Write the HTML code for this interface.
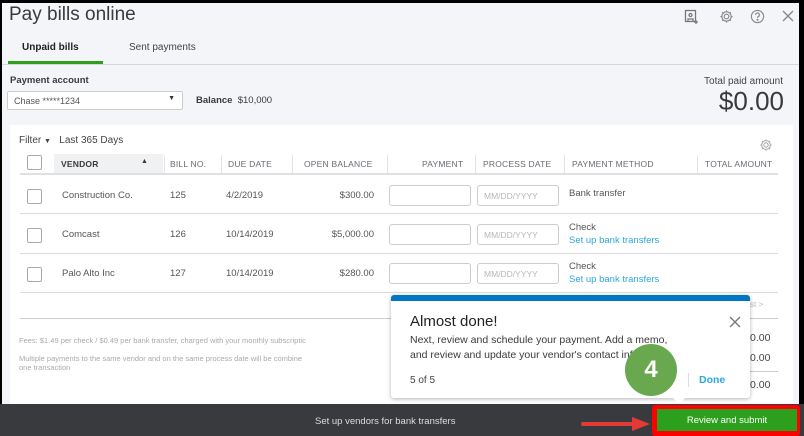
<!DOCTYPE html>
<html><head><meta charset="utf-8"><style>
*{margin:0;padding:0;box-sizing:border-box}
body{width:804px;height:436px;overflow:hidden;background:#000;font-family:"Liberation Sans",sans-serif;color:#393a3d;position:relative}
.a{position:absolute}
#pg{position:absolute;left:0;top:0;width:804px;height:436px;background:#f4f5f8;overflow:hidden}
.s{font-size:9.5px;color:#555}
.h{font-size:8.5px;color:#6b6c72;letter-spacing:.2px}
.cb{position:absolute;width:15px;height:15px;border:1px solid #aaa;background:#fff;border-radius:2px}
.in{position:absolute;width:82px;height:21px;border:1px solid #ccc;border-radius:3px;background:#fff}
.dt{position:absolute;width:82px;height:21px;border:1px solid #ccc;border-radius:3px;background:#fff;font-size:8.5px;color:#b8b8b8;padding:5px 0 0 6px}
.ln{position:absolute;height:1px;background:#dcdcdc}
.lk{color:#2ca7e0}
</style></head><body>
<div id="pg">
<div class="a" style="left:9px;top:4px;font-size:19px;color:#393a3d">Pay bills online</div>
<svg class="a" style="left:684px;top:9px" width="16" height="16" viewBox="0 0 16 16" fill="none" stroke="#777" stroke-width="1.3"><rect x="1.5" y="1.5" width="10" height="11"/><circle cx="6.5" cy="6" r="1.5"/><path d="M4 12v-2h5v2M12 11v4M10 13h4"/></svg>
<svg class="a" style="left:719px;top:9px" width="15" height="15" viewBox="0 0 16 16" fill="none" stroke="#888" stroke-width="1.2"><circle cx="8" cy="8" r="2.5"/><path d="M8 1.5v2M8 12.5v2M1.5 8h2M12.5 8h2M3.4 3.4l1.4 1.4M11.2 11.2l1.4 1.4M3.4 12.6l1.4-1.4M11.2 4.8l1.4-1.4"/><circle cx="8" cy="8" r="5"/></svg>
<svg class="a" style="left:750px;top:9px" width="15" height="15" viewBox="0 0 16 16" fill="none" stroke="#888" stroke-width="1.2"><circle cx="8" cy="8" r="6.5"/><path d="M6 6.3a2 2 0 1 1 2.5 1.9c-.4.2-.5.5-.5 1.2"/><circle cx="8" cy="11.5" r=".5" fill="#888"/></svg>
<svg class="a" style="left:782px;top:10px" width="12" height="12" viewBox="0 0 12 12" stroke="#888" stroke-width="1.4"><path d="M1 1l10 10M11 1L1 11"/></svg>
<div class="a" style="left:22px;top:42px;font-size:10px;font-weight:bold;color:#222">Unpaid bills</div>
<div class="a" style="left:129px;top:42px;font-size:10px;color:#444">Sent payments</div>
<div class="a" style="left:8px;top:61px;width:95px;height:3px;background:#2ca01c"></div>
<div class="ln" style="left:0;top:64px;width:804px;background:#d4d7dc"></div>
<div class="a" style="left:10px;top:75px;font-size:9.5px;font-weight:bold;color:#393a3d">Payment account</div>
<div class="a" style="left:7px;top:91px;width:176px;height:19px;border:1px solid #ccc;background:#fff;border-radius:2px;font-size:9px;color:#555;padding:4px 0 0 6px">Chase *****1234<span style="position:absolute;right:7px;top:3px;font-size:7px;color:#333">▼</span></div>
<div class="a" style="left:196px;top:95px;font-size:9.5px"><b>Balance</b>&nbsp; $10,000</div>
<div class="a" style="left:660px;top:76px;width:123px;text-align:right;font-size:10px;color:#444">Total paid amount</div>
<div class="a" style="left:640px;top:86px;width:144px;text-align:right;font-size:26px;color:#393a3d">$0.00</div>
<div class="a" style="left:10px;top:125px;width:783px;height:285px;background:#fff"></div>
<div class="a" style="left:19px;top:135px;font-size:10px;color:#444">Filter <span style="font-size:7px">▼</span>&nbsp;&nbsp; Last 365 Days</div>
<svg class="a" style="left:759px;top:138px" width="14" height="14" viewBox="0 0 16 16" fill="none" stroke="#aaa" stroke-width="1.2"><circle cx="8" cy="8" r="2.5"/><circle cx="8" cy="8" r="5"/><path d="M8 1.5v2M8 12.5v2M1.5 8h2M12.5 8h2M3.4 3.4l1.4 1.4M11.2 11.2l1.4 1.4M3.4 12.6l1.4-1.4M11.2 4.8l1.4-1.4"/></svg>
<div class="cb" style="left:27px;top:155px"></div>
<div class="a" style="left:54px;top:154px;width:109px;height:19px;background:#f0f1f3"></div>
<div class="a h" style="left:61px;top:159px;font-weight:bold;color:#393a3d">VENDOR</div>
<div class="a" style="left:141px;top:158px;font-size:7px">▲</div>
<div class="a h" style="left:170px;top:159px">BILL NO.</div>
<div class="a h" style="left:228px;top:159px">DUE DATE</div>
<div class="a h" style="left:304px;top:159px">OPEN BALANCE</div>
<div class="a h" style="left:422px;top:159px">PAYMENT</div>
<div class="a h" style="left:483px;top:159px">PROCESS DATE</div>
<div class="a h" style="left:572px;top:159px">PAYMENT METHOD</div>
<div class="a h" style="left:705px;top:159px">TOTAL AMOUNT</div>
<div class="a" style="left:164px;top:155px;width:1px;height:18px;background:#e4e4e4"></div>
<div class="a" style="left:221px;top:155px;width:1px;height:18px;background:#e4e4e4"></div>
<div class="a" style="left:292px;top:155px;width:1px;height:18px;background:#e4e4e4"></div>
<div class="a" style="left:387px;top:155px;width:1px;height:18px;background:#e4e4e4"></div>
<div class="a" style="left:475px;top:155px;width:1px;height:18px;background:#e4e4e4"></div>
<div class="a" style="left:564px;top:155px;width:1px;height:18px;background:#e4e4e4"></div>
<div class="a" style="left:697px;top:155px;width:1px;height:18px;background:#e4e4e4"></div>
<div class="ln" style="left:20px;top:173px;width:758px;height:2px;background:#dfe0e2"></div>
<div class="cb" style="left:27px;top:189px"></div>
<div class="a s" style="left:62px;top:190px">Construction Co.</div>
<div class="a s" style="left:170px;top:190px">125</div>
<div class="a s" style="left:226px;top:190px">4/2/2019</div>
<div class="a s" style="left:292px;top:190px;width:82px;text-align:right">$300.00</div>
<div class="in" style="left:389px;top:185px"></div><div class="dt" style="left:477px;top:185px">MM/DD/YYYY</div>
<div class="a s" style="left:569px;top:188px">Bank transfer</div>
<div class="ln" style="left:20px;top:213px;width:758px"></div>
<div class="cb" style="left:27px;top:228px"></div>
<div class="a s" style="left:62px;top:229px">Comcast</div>
<div class="a s" style="left:170px;top:229px">126</div>
<div class="a s" style="left:226px;top:229px">10/14/2019</div>
<div class="a s" style="left:292px;top:229px;width:82px;text-align:right">$5,000.00</div>
<div class="in" style="left:389px;top:224px"></div><div class="dt" style="left:477px;top:224px">MM/DD/YYYY</div>
<div class="a s" style="left:569px;top:222px">Check</div>
<div class="a s lk" style="left:569px;top:235px">Set up bank transfers</div>
<div class="ln" style="left:20px;top:253px;width:758px"></div>
<div class="cb" style="left:27px;top:267px"></div>
<div class="a s" style="left:62px;top:268px">Palo Alto Inc</div>
<div class="a s" style="left:170px;top:268px">127</div>
<div class="a s" style="left:226px;top:268px">10/14/2019</div>
<div class="a s" style="left:292px;top:268px;width:82px;text-align:right">$280.00</div>
<div class="in" style="left:389px;top:263px"></div><div class="dt" style="left:477px;top:263px">MM/DD/YYYY</div>
<div class="a s" style="left:569px;top:261px">Check</div>
<div class="a s lk" style="left:569px;top:274px">Set up bank transfers</div>
<div class="ln" style="left:20px;top:292px;width:758px"></div>
<div class="a" style="left:750px;top:300px;font-size:8px;color:#bbb">st &gt;</div>
<div class="ln" style="left:20px;top:318px;width:758px;height:1px;background:#ccc"></div>
<div class="a" style="left:19px;top:336px;font-size:7.5px;color:#aaa;white-space:nowrap">Fees: $1.49 per check / $0.49 per bank transfer, charged with your monthly subscriptic</div>
<div class="a" style="left:19px;top:354px;font-size:7.5px;color:#aaa;line-height:9px;width:380px">Multiple payments to the same vendor and on the same process date will be combine<br>one transaction</div>
<div class="a" style="left:750px;top:332px;font-size:10.5px;color:#444">0.00</div>
<div class="a" style="left:750px;top:352px;font-size:10.5px;color:#444">0.00</div>
<div class="ln" style="left:744px;top:371px;width:34px;background:#ccc"></div>
<div class="a" style="left:750px;top:379px;font-size:10.5px;color:#444">0.00</div>
<div class="a" style="left:0;top:404px;width:804px;height:32px;background:#393a3d"></div>
<div class="a" style="left:315px;top:416px;font-size:9.5px;color:#ddd">Set up vendors for bank transfers</div>
<div class="a" style="left:652px;top:405px;width:148px;height:31px;background:#f00;border-radius:3px"></div>
<div class="a" style="left:657px;top:409px;width:140px;height:22px;background:#2ca01c;color:#fff;font-size:9.5px;text-align:center;padding-top:6px">Review and submit</div>
<svg class="a" style="left:580px;top:416px" width="74" height="16" viewBox="0 0 74 16"><path d="M3 8h54" stroke="#e53935" stroke-width="4" stroke-linecap="round"/><path d="M52 1l18 7-18 7z" fill="#e53935"/></svg>
<div class="a" style="left:391px;top:295px;width:359px;height:103px;background:#fff;border-radius:3px;box-shadow:0 1px 4px rgba(0,0,0,.3);overflow:hidden">
<div style="height:6px;background:#0077c5"></div>
</div>
<div class="a" style="left:672px;top:397px;width:0;height:0;border-left:7px solid transparent;border-right:7px solid transparent;border-top:7px solid #fff"></div>
<div class="a" style="left:410px;top:313px;font-size:15px;color:#222">Almost done!</div>
<svg class="a" style="left:729px;top:316px" width="12" height="12" viewBox="0 0 12 12" stroke="#777" stroke-width="1.3"><path d="M1 1l10 10M11 1L1 11"/></svg>
<div class="a" style="left:410px;top:333px;font-size:10.5px;color:#393a3d;line-height:15px;white-space:nowrap">Next, review and schedule your payment. Add a memo,<br>and review and update your vendor's contact info.</div>
<div class="a" style="left:410px;top:375px;font-size:10px;color:#444">5 of 5</div>
<div class="a" style="left:688px;top:373px;width:1px;height:14px;background:#ddd"></div>
<div class="a" style="left:699px;top:374px;font-size:10.5px;font-weight:bold;color:#2ca7e0">Done</div>
<div class="a" style="left:625px;top:344px;width:52px;height:52px;border-radius:50%;background:#6aa84f;color:#fff;font-size:24px;font-weight:bold;text-align:center;line-height:52px">4</div>
<div class="a" style="left:0;top:0;width:804px;height:3px;background:#000"></div>
<div class="a" style="left:0;top:0;width:2px;height:404px;background:#000"></div>
<div class="a" style="left:799px;top:0;width:5px;height:404px;background:#000"></div>
</div>
</body></html>
